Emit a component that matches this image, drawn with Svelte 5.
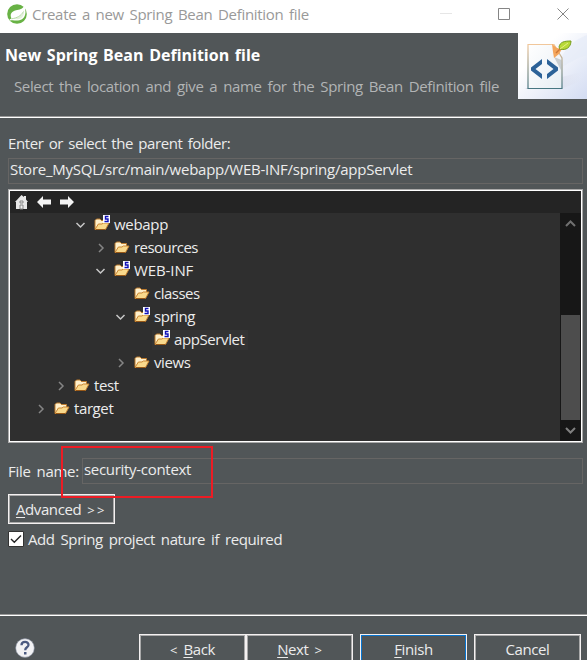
<script>
  const rows = [
    { name: 'webapp', depth: 2, state: 'open', source: true, ls: -0.3 },
    { name: 'resources', depth: 3, state: 'closed', ls: -0.55 },
    { name: 'WEB-INF', depth: 3, state: 'open', source: true, ls: -0.1 },
    { name: 'classes', depth: 4, ls: -0.5 },
    { name: 'spring', depth: 4, state: 'open', source: true, ls: -0.45 },
    { name: 'appServlet', depth: 5, source: true, selected: true, ls: -0.4 },
    { name: 'views', depth: 4, state: 'closed', ls: -0.4 },
    { name: 'test', depth: 1, state: 'closed', ls: -0.4 },
    { name: 'target', depth: 0, state: 'closed', ls: -0.4 }
  ];
</script>

{#snippet folder(source)}
  <svg class="folder" width="16" height="18" viewBox="0 0 16 18">
    <path d="M1 15V6.500L2.500 5H6L7.500 6.500H12.500V9" fill="#fff0cb" stroke="#bd7b2d" />
    <path d="M1 15.500L4.400 10H8L9.300 9H15L11.500 15.500Z" fill="#f9d98c" stroke="#c98532" />
    <path d="M2 15.500H11.500" stroke="#985817" />
    {#if source}
      <path d="M9 1H16V9H9Z" fill="#fff" />
      <path d="M14.500 2.500H11.500V5H14V7.500H10.500" fill="none" stroke="#1010b8" stroke-width="1.400" />
    {/if}
  </svg>
{/snippet}

<div class="window">
  <div class="titlebar">
    <svg class="leaf" width="20" height="20" viewBox="0 0 20 20">
      <circle cx="10" cy="10" r="9.800" fill="#68b245" />
      <path d="M17.300 1.500C18 3.500 18.600 6 18.500 8.500C18.200 13.500 15 16.300 11 16.500C8 16.700 5.500 15.800 3.200 16.600C2 15.500 3 15 4.500 14.500C2.500 10.500 4.500 7.300 9 6.300C12.500 5.500 15.700 5.200 17.300 1.500Z" fill="#fff" />
      <path d="M16.800 4.500C17.600 9.500 16.500 14 12 15C9.500 15.500 7.500 14.800 5.500 15C10.500 14.300 14.500 12 16.800 8Z" fill="#e2f0db" />
      <path d="M16.500 7.500C14 12 10 14 4.500 14.800" fill="none" stroke="#a5d08f" stroke-width=".8" />
    </svg>
    <span class="caption">Create a new Spring Bean Definition file</span>
    <svg class="controls" width="130" height="20" viewBox="0 0 130 20" fill="none">
      <path d="M0 9.500H12" stroke="#e6e6e6" />
      <path d="M58.500 4.500H69.500V15.500H58.500Z" stroke="#858585" />
      <path d="M117.500 4.500L128.500 15.500M128.500 4.500L117.500 15.500" stroke="#858585" />
    </svg>
  </div>

  <div class="header">
    <div class="heading">
      <h1>New Spring Bean Definition file</h1>
      <p>Select the location and give a name for the Spring Bean Definition file</p>
    </div>
    <svg width="69" height="66" viewBox="0 0 69 66">
      <defs>
        <linearGradient id="sky" x2="1" y2="1">
          <stop offset=".3" stop-color="#fff" /><stop offset="1" stop-color="#d3dcf2" />
        </linearGradient>
        <linearGradient id="shade" x2="1">
          <stop stop-color="#a7a7bd" /><stop offset="1" stop-color="#e4e7f3" stop-opacity=".2" />
        </linearGradient>
        <linearGradient id="paper" x2="1" y2="1">
          <stop stop-color="#fff" /><stop offset="1" stop-color="#e8eef4" />
        </linearGradient>
        <linearGradient id="edge" x2="0" y2="1">
          <stop stop-color="#f1c79b" /><stop offset="1" stop-color="#477681" />
        </linearGradient>
      </defs>
      <path d="M0 0H69V66H0Z" fill="url(#sky)" />
      <path d="M69 2C56 7 49 14 43 25L44 34C53 29 61 24 69 22Z" fill="#e5ebf8" opacity=".65" />
      <path d="M44 44L63 39V48L43 56H7Z" fill="url(#shade)" opacity=".65" />
      <path d="M10 11.500H36L44 25V55.500H10Z" fill="url(#paper)" stroke="url(#edge)" stroke-width="1.200" />
      <path d="M36 24L43.500 27V38Z" fill="#aeb4b8" opacity=".6" />
      <path d="M24 26V31L17.500 36L24 41V46L13 37.500V34.500ZM29 26V31L35.500 36L29 41V46L40 37.500V34.500Z" fill="#2c6298" />
      <path d="M34 11L39 15L44 16L41 21L36 25L35 19Z" fill="#f4a65d" />
      <path d="M38 20L45 13" stroke="#cd7837" stroke-width="1.500" />
      <path d="M41 14C42 9 46 8 53 8C53 14 48 18 42 16Z" fill="#b8d936" stroke="#769c20" />
      <path d="M42 16L50 10" stroke="#e5ef88" />
    </svg>
  </div>

  <div class="content">
    <div class="folder-label">Enter or select the parent folder:</div>
    <div class="input path"><span>Store_MySQL/src/main/webapp/WEB-INF/spring/appServlet</span></div>

    <div class="browser">
      <div class="toolbar">
        <svg width="62" height="18" viewBox="0 0 62 18">
          <path d="M0 9L6.500 2L9 4V3H11V6.500L13 9H12V16H1V9Z" fill="#e8e8e8" />
          <path d="M5 8H8V10H5ZM5 12H8V16H5Z" fill="#eee" stroke="#888" />
          <path d="M22 9L28 3V6.500H36V11.500H28V15ZM59 9L53 3V6.500H45V11.500H53V15Z" fill="#f4f4f4" />
        </svg>
      </div>
      <div class="tree-area">
        <div class="tree">
          {#each rows as row}
            <div class="row" style="padding-left: {24 + row.depth * 20}px">
              <span class="twisty">
                {#if row.state}
                  <svg width="12" height="12" viewBox="0 0 12 12" fill="none" stroke-width="1.500">
                    {#if row.state === 'open'}
                      <path d="M2.500 4L6.500 8L10.500 4" stroke="#c8c8c8" />
                    {:else}
                      <path d="M5 2L9 6L5 10" stroke="#858585" />
                    {/if}
                  </svg>
                {/if}
              </span>
              <span class="entry" class:selected={row.selected}>
                {@render folder(row.source)}
                <span class="name" style="letter-spacing: {row.ls}px">{row.name}</span>
              </span>
            </div>
          {/each}
        </div>
        <div class="scrollbar">
          <svg width="11" height="8" viewBox="0 0 11 8"><path d="M1 7L5.500 2.500L10 7" fill="none" stroke="#707070" stroke-width="2" /></svg>
          <div class="thumb"></div>
          <svg width="11" height="8" viewBox="0 0 11 8"><path d="M1 2L5.500 6.500L10 2" fill="none" stroke="#808080" stroke-width="2" /></svg>
        </div>
      </div>
    </div>

    <div class="file-row">
      <span class="file-label">File name:</span>
      <div class="input file"><span>security-context</span></div>
      <div class="highlight"></div>
    </div>

    <div class="button advanced"><span><u>A</u>dvanced <span class="arrows">&gt;&gt;</span></span></div>
    <div class="check-row">
      <svg width="16" height="16" viewBox="0 0 16 16">
        <path d="M.5 .5H15.500V15.500H.5Z" fill="#fff" stroke="#333" />
        <path d="M3 8L6.300 11.300L13 4.500" fill="none" stroke="#222" stroke-width="1.400" />
      </svg>
      <span>Add Spring project nature if required</span>
    </div>
  </div>

  <div class="footer">
    <svg class="help" width="20" height="20" viewBox="0 0 20 20">
      <circle cx="10" cy="10" r="9.400" fill="#f2f2f4" stroke="#777f92" stroke-width=".6" />
      <path d="M6.500 7.300C6.500 2.800 13.700 3 13.500 7C13.400 9.300 10.200 9.300 10.200 12.200" fill="none" stroke="#4b5a80" stroke-width="2.300" />
      <path d="M9 14H11.500V16.500H9Z" fill="#4b5a80" />
    </svg>
    <div class="button back"><span><span class="arrows">&lt;</span> <u>B</u>ack</span></div>
    <div class="button next"><span><u>N</u>ext <span class="arrows">&gt;</span></span></div>
    <div class="button finish"><span><u>F</u>inish</span></div>
    <div class="button cancel"><span>Cancel</span></div>
  </div>
</div>

<style>
  :global(body) { margin: 0; overflow: hidden; }
  .window {
    width: 587px; height: 660px; overflow: hidden; box-sizing: border-box;
    display: flex; flex-direction: column; background: #515658; color: #ececec;
    font: 15px/20px "Open Sans", "Noto Sans", sans-serif; letter-spacing: -0.4px; word-spacing: 2.4px; white-space: nowrap;
  }
  svg { display: block; flex: none; }
  .titlebar { height: 33px; flex: none; display: flex; align-items: flex-start; background: #fff; color: #999; }
  .leaf { margin: 4px 0 0 7px; }
  .caption { margin: 4px 0 0 5px; width: 408px; letter-spacing: -0.3px; word-spacing: 2px; }
  .controls { margin-top: 4px; }
  .header { height: 83px; flex: none; display: flex; justify-content: space-between; border-bottom: 1px solid #999; box-shadow: 0 1px #fff; }
  h1 { margin: 12px 0 0 5px; font-size: 16px; line-height: 20px; letter-spacing: 0; word-spacing: 1.500px; color: #fff; }
  p { margin: 11px 0 0 14px; color: #b2b4b5; letter-spacing: -0.37px; }
  .content { padding: 16px 4px 0 8px; display: flex; flex-direction: column; }
  .folder-label { height: 25px; word-spacing: 1.700px; }
  .input { box-sizing: border-box; height: 26px; border: 1px solid #666564; padding: 0 1px; }
  .path { letter-spacing: -0.24px; }
  .file { letter-spacing: -0.3px; }
  .browser { margin-top: 5px; height: 254px; box-sizing: border-box; border: 1px solid #aaa; box-shadow: inset 0 0 0 1px #fff; padding: 1px; background: #2f2f2f; }
  .toolbar { height: 22px; background: #242424; padding: 2px 5px; box-sizing: border-box; }
  .tree-area { height: 228px; display: flex; }
  .tree { flex: 1; }
  .row { height: 23px; display: flex; align-items: center; }
  .twisty { width: 18px; }
  .entry { display: flex; height: 20px; align-items: center; padding: 0 3px 0 2px; }
  .name { margin-top: -2px; }
  .selected { background: #333; }
  .folder { margin: -3px 4px 0 0; }
  .scrollbar { width: 21px; background: #171717; display: flex; flex-direction: column; align-items: center; padding: 6px 0 7px; box-sizing: border-box; justify-content: space-between; }
  .thumb { width: 19px; height: 105px; background: #4d4d4d; margin-top: 81px; }
  .file-row { position: relative; display: flex; margin-top: 15px; }
  .file-label { width: 74px; padding-top: 3px; letter-spacing: -0.3px; }
  .file { flex: 1; }
  .highlight { position: absolute; left: 53px; top: -12px; width: 152px; height: 52px; border: 2px solid #ed1c24; box-sizing: border-box; }
  .button { box-sizing: border-box; width: 107px; height: 30px; flex: none; border: 1px solid #f4f1f1; box-shadow: inset 0 0 0 1px #aaa; display: flex; justify-content: center; padding-top: 4px; }
  .arrows { font-size: 13px; letter-spacing: 2.500px; }
  .back .arrows, .next .arrows { letter-spacing: 0; }
  u { text-underline-offset: 2px; text-decoration-thickness: 1px; }
  .advanced { margin-top: 10px; }
  .check-row { display: flex; gap: 4px; margin-top: 7px; }
  .check-row span { margin-top: -2px; }
  .footer { margin-top: auto; height: 46px; flex: none; display: flex; border-top: 1px solid #999; box-shadow: inset 0 1px #fff; box-sizing: border-box; }
  .footer .button { margin-top: 19px; }
  .help { margin: 23px 0 0 15px; }
  .back { margin-left: 104px; }
  .footer .finish { box-shadow: inset 0 0 0 1px #0875d1; }
  .finish, .cancel { margin-left: 7px; }
</style>
